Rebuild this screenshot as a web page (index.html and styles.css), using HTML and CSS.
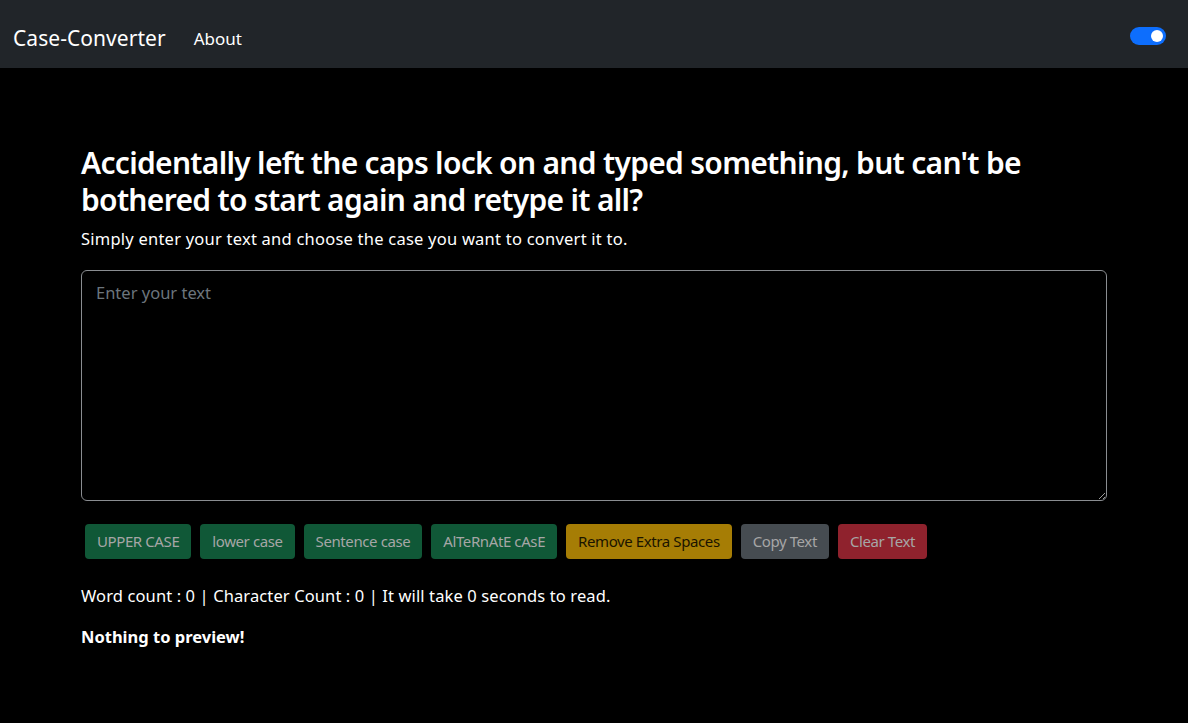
FILE: index.html
```html
<!DOCTYPE html>
<html lang="en">
<head>
<meta charset="utf-8">
<title>Case-Converter</title>
<link rel="stylesheet" href="styles.css">
</head>
<body>
<nav class="navbar">
  <div class="nav-left">
    <a class="brand" href="#">Case-Converter</a>
    <a class="nav-link" href="#">About</a>
  </div>
  <div class="switch"><span class="knob"></span></div>
</nav>
<main class="container">
  <h1 class="title">Accidentally left the caps lock on and typed something, but can't be bothered to start again and retype it all?</h1>
  <p class="lead">Simply enter your text and choose the case you want to convert it to.</p>
  <textarea class="box" placeholder="Enter your text"></textarea>
  <div class="buttons">
    <button class="btn green" disabled>UPPER CASE</button>
    <button class="btn green" disabled>lower case</button>
    <button class="btn green" disabled>Sentence case</button>
    <button class="btn green" disabled>AlTeRnAtE cAsE</button>
    <button class="btn yellow" disabled>Remove Extra Spaces</button>
    <button class="btn gray" disabled>Copy Text</button>
    <button class="btn red" disabled>Clear Text</button>
  </div>
  <p class="stats">Word count : 0 | Character Count : 0 | It will take 0 seconds to read.</p>
  <p class="preview">Nothing to preview!</p>
</main>
</body>
</html>
```
FILE: styles.css
```css
html, body {
  margin: 0;
  padding: 0;
}
body {
  background: #000;
  color: #fff;
  font-family: "Noto Sans", "Open Sans", sans-serif;
  font-size: 16.5px;
  line-height: 1.5;
}
.navbar {
  height: 68px;
  background: #212529;
  display: flex;
  align-items: center;
  justify-content: space-between;
  padding: 9px 22px 0 13px;
  box-sizing: border-box;
}
.nav-left {
  display: flex;
  align-items: center;
  gap: 28px;
}
.brand {
  color: #fff;
  text-decoration: none;
  font-size: 21px;
  letter-spacing: 0.05px;
}
.nav-link {
  color: #fff;
  text-decoration: none;
  font-size: 17px;
}
.switch {
  width: 36px;
  height: 18px;
  border-radius: 9px;
  background: #0d6efd;
  display: flex;
  align-items: center;
  justify-content: flex-end;
  padding: 0 3px;
  box-sizing: border-box;
  margin-top: -6px;
}
.knob {
  width: 12px;
  height: 12px;
  border-radius: 50%;
  background: #fff;
}
.container {
  margin: 0 81px;
  padding-top: 76px;
}
.title {
  font-size: 30px;
  font-weight: 600;
  line-height: 37px;
  margin: 0 0 9px;
  letter-spacing: -0.7px;
}
.lead {
  margin: 0 0 18px;
  letter-spacing: 0.23px;
}
.box {
  display: block;
  width: 100%;
  height: 231px;
  box-sizing: border-box;
  background: #000;
  border: 1px solid #8a8d91;
  border-radius: 6px;
  padding: 10px 14px;
  color: #fff;
  font-family: inherit;
  font-size: 16.5px;
  resize: vertical;
  margin: 0;
}
.box::placeholder {
  color: #6c757d;
}
.buttons {
  display: flex;
  gap: 9px;
  margin-top: 23px;
  padding-left: 4px;
}
.btn {
  font-family: inherit;
  font-size: 15px;
  line-height: 23px;
  padding: 5px 11px;
  border: 1px solid transparent;
  border-radius: 4px;
  color: #a6a6a6;
  letter-spacing: -0.4px;
}
.green { background: #105837; }
.yellow { background: #a67d05; color: #1a1400; }
.gray { background: #464c51; }
.red { background: #8f222d; }
.stats {
  margin: 25px 0 16px;
  letter-spacing: 0.11px;
}
.preview {
  margin: 0;
  font-weight: 700;
}
```
